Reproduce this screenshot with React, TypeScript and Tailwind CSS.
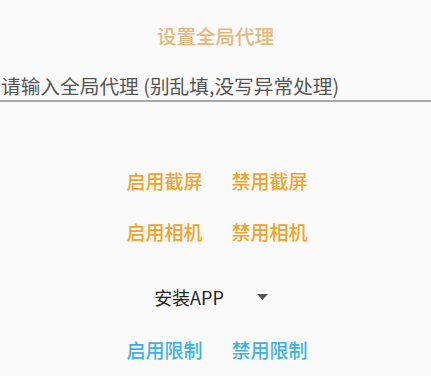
export default function App() {
  const font = { fontFamily: '"Noto Sans CJK SC", "Noto Sans", sans-serif' };
  return (
    <div className="w-[431px] h-[376px] bg-[#fafafa] overflow-hidden flex flex-col" style={font}>
      <div className="h-[72px] flex items-center justify-center text-[19.5px] font-medium text-[#e8b77c]">
        设置全局代理
      </div>
      <div className="h-[30px] border-b-2 border-[#a8a8a8] flex items-center pl-[1px] text-[19.7px] text-[#555] whitespace-nowrap">
        请输入全局代理 (别乱填,没写异常处理)
      </div>
      <div className="h-[55px]" />
      <div className="h-[51px] flex items-center justify-center gap-[29px] pl-[3px] text-[19px] font-medium text-[#f2a32c]">
        <span>启用截屏</span>
        <span>禁用截屏</span>
      </div>
      <div className="h-[51px] flex items-center justify-center gap-[29px] pl-[3px] text-[19px] font-medium text-[#f2a32c]">
        <span>启用相机</span>
        <span>禁用相机</span>
      </div>
      <div className="h-[40px] mt-[20px] flex items-center justify-center pr-[9px]">
        <span className="text-[18px] text-[#222]">安装APP</span>
        <svg width="11" height="6" viewBox="0 0 11 6" className="ml-[33px]">
          <path d="M0 0 L11 0 L5.5 6 Z" fill="#555" />
        </svg>
      </div>
      <div className="h-[51px] mt-[8px] flex items-center justify-center gap-[29px] pl-[3px] text-[19px] font-medium text-[#3db2e2]">
        <span>启用限制</span>
        <span>禁用限制</span>
      </div>
    </div>
  );
}
